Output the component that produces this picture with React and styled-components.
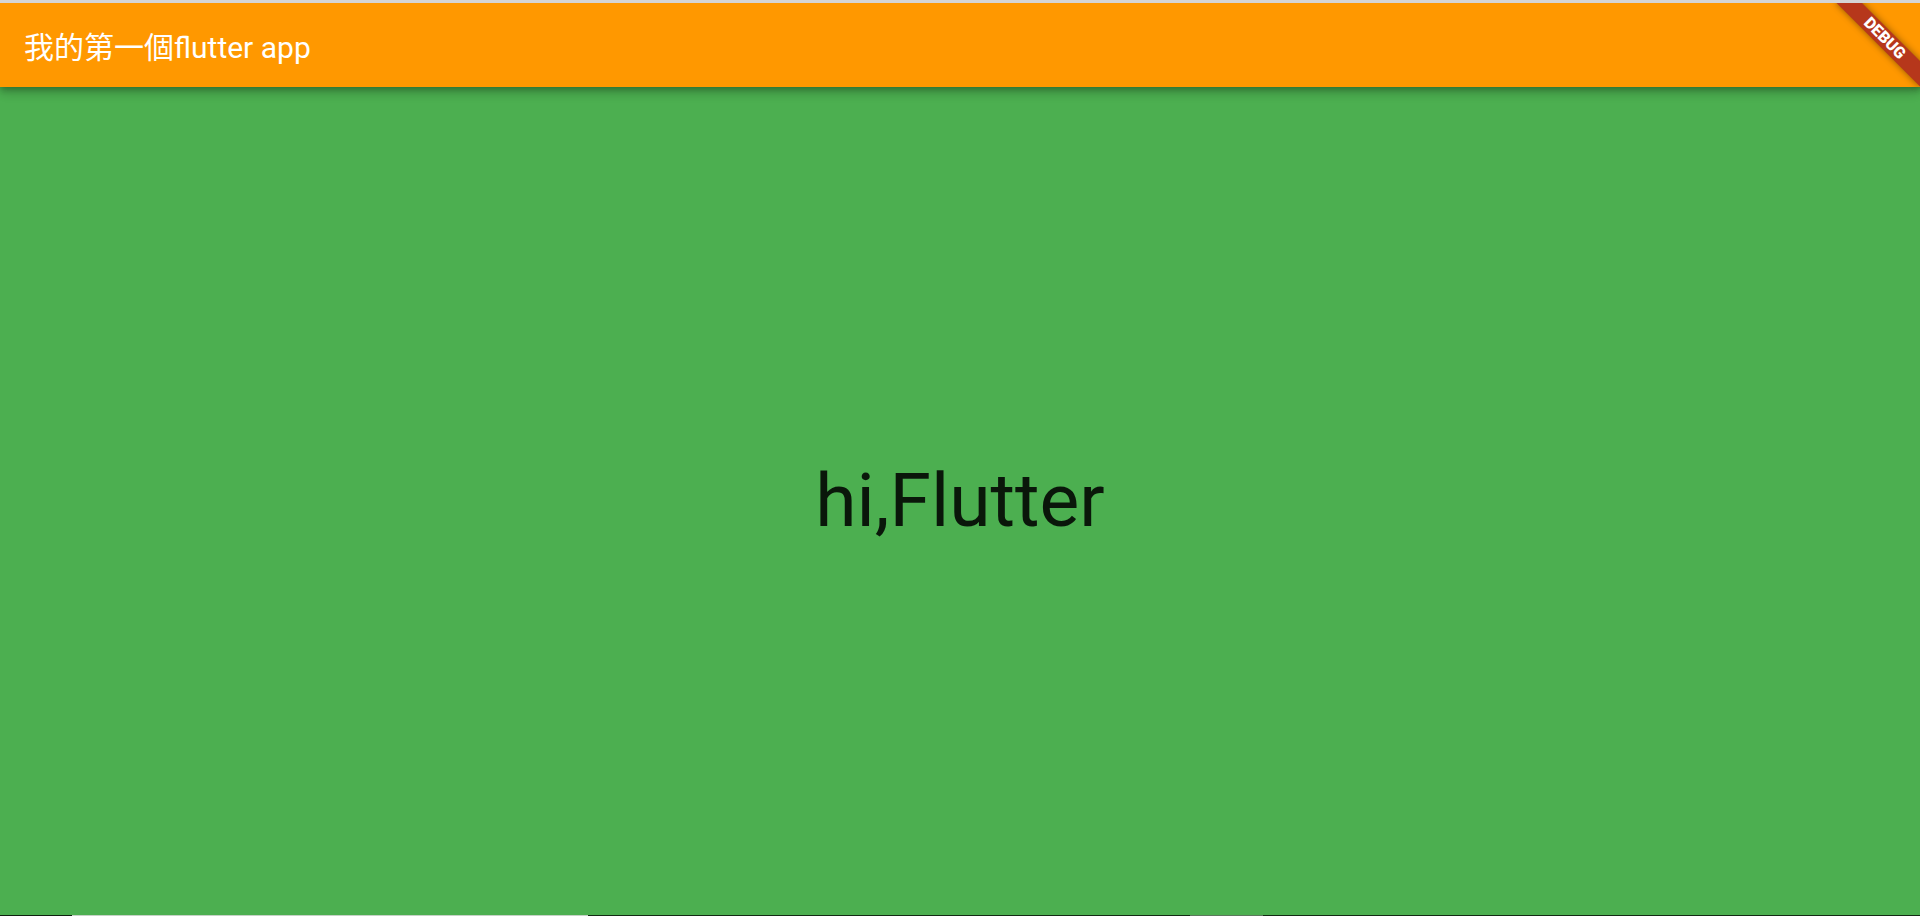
import React from "react";
import styled, { createGlobalStyle } from "styled-components";

const Global = createGlobalStyle`
  html, body {
    margin: 0;
    padding: 0;
    overflow: hidden;
    background: #4caf50;
  }
  body {
    font-family: Roboto, "Noto Sans CJK TC", sans-serif;
  }
`;

const Page = styled.div`
  display: flex;
  flex-direction: column;
  width: 1920px;
  height: 916px;
`;

const TopStrip = styled.div`
  height: 3px;
  flex: none;
  background: #d5d5d5;
`;

const Frame = styled.div`
  position: relative;
  flex: 1;
  display: flex;
  flex-direction: column;
  overflow: hidden;
  background: #4caf50;
`;

const AppBar = styled.header`
  position: relative;
  z-index: 1;
  height: 84px;
  flex: none;
  display: flex;
  align-items: center;
  padding: 0 24px;
  background: #ff9800;
  box-shadow: 0 3px 6px -1px rgba(0, 0, 0, 0.2), 0 6px 8px rgba(0, 0, 0, 0.14),
    0 2px 15px rgba(0, 0, 0, 0.12);
`;

const Title = styled.h1`
  margin: 0;
  font-family: Roboto, "Noto Sans CJK TC", sans-serif;
  font-size: 30px;
  font-weight: 400;
  color: #ffffff;
  letter-spacing: 0;
`;

const Body = styled.main`
  flex: 1;
  display: flex;
  align-items: center;
  justify-content: center;
`;

const Greeting = styled.span`
  font-family: Roboto, sans-serif;
  font-size: 75px;
  line-height: 1.172;
  color: rgba(0, 0, 0, 0.87);
`;

// debug ribbon, drawn over the top-right corner like flutter's CheckedModeBanner
const Corner = styled.div`
  position: absolute;
  top: 0;
  right: 0;
  width: 0;
  height: 0;
  z-index: 2;
  transform: rotate(45deg);
  transform-origin: 0 0;
`;

const Ribbon = styled.div`
  position: absolute;
  left: -60px;
  top: 41px;
  width: 120px;
  height: 18px;
  display: flex;
  align-items: center;
  justify-content: center;
  background: #b6371b;
  box-shadow: 0 0 7px rgba(0, 0, 0, 0.45);
  color: #ffffff;
  font-family: Roboto, sans-serif;
  font-size: 16px;
  font-weight: 900;
  line-height: 1;
`;

const BottomStrip = styled.div`
  height: 1px;
  flex: none;
  display: flex;
`;

const Segment = styled.div`
  width: ${(p) => p.w}px;
  flex: ${(p) => (p.w ? "none" : 1)};
  background: ${(p) => p.c};
`;

const segments = [
  { w: 72, c: "#0f200f" },
  { w: 516, c: "#c6d2c6" },
  { w: 602, c: "#132a13" },
  { w: 73, c: "#5c785c" },
  { w: 0, c: "#132a13" },
];

const App = () => {
  return (
    <Page>
      <Global />
      <TopStrip />
      <Frame>
        <AppBar>
          <Title>我的第一個flutter app</Title>
        </AppBar>
        <Body>
          <Greeting>hi,Flutter</Greeting>
        </Body>
        <Corner>
          <Ribbon>DEBUG</Ribbon>
        </Corner>
      </Frame>
      <BottomStrip>
        {segments.map((s, i) => (
          <Segment key={i} w={s.w} c={s.c} />
        ))}
      </BottomStrip>
    </Page>
  );
};

export default App;
